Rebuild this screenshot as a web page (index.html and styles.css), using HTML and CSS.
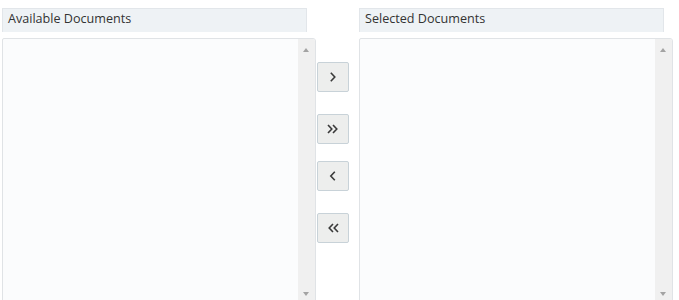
FILE: index.html
```html
<!DOCTYPE html>
<html>
<head>
<meta charset="utf-8">
<link rel="stylesheet" href="styles.css">
</head>
<body>
<div class="shuttle">
  <div class="pane">
    <div class="pane-header">Available Documents</div>
    <div class="listbox">
      <div class="list-area"></div>
      <div class="scrollbar">
        <span class="arrow-up"></span>
        <span class="arrow-down"></span>
      </div>
    </div>
  </div>
  <div class="controls">
    <div class="btn-group">
      <button class="move-btn" title="Move">
        <svg width="12" height="12" viewBox="0 0 12 12"><path d="M3.8 1.8 L7.8 6 L3.8 10.2" fill="none" stroke="#3a3a3a" stroke-width="1.6"/></svg>
      </button>
      <button class="move-btn" title="Move All">
        <svg width="14" height="12" viewBox="0 0 14 12"><path d="M2 2 L5.8 6 L2 10 M7 2 L10.8 6 L7 10" fill="none" stroke="#3a3a3a" stroke-width="1.6"/></svg>
      </button>
    </div>
    <div class="btn-group">
      <button class="move-btn" title="Remove">
        <svg width="12" height="12" viewBox="0 0 12 12"><path d="M7.8 1.8 L3.8 6 L7.8 10.2" fill="none" stroke="#3a3a3a" stroke-width="1.6"/></svg>
      </button>
      <button class="move-btn" title="Remove All">
        <svg width="14" height="12" viewBox="0 0 14 12"><path d="M7 2 L3.2 6 L7 10 M12 2 L8.2 6 L12 10" fill="none" stroke="#3a3a3a" stroke-width="1.6"/></svg>
      </button>
    </div>
  </div>
  <div class="pane">
    <div class="pane-header">Selected Documents</div>
    <div class="listbox">
      <div class="list-area"></div>
      <div class="scrollbar">
        <span class="arrow-up"></span>
        <span class="arrow-down"></span>
      </div>
    </div>
  </div>
</div>
</body>
</html>
```

FILE: styles.css
```css
html, body {
  margin: 0;
  padding: 0;
  background: #ffffff;
  font-family: "Open Sans", "Noto Sans", "Liberation Sans", sans-serif;
  overflow: hidden;
}

.shuttle {
  display: flex;
  align-items: flex-start;
  padding: 8px 0 0 2px;
}

.pane {
  display: flex;
  flex-direction: column;
  width: 314px;
}

.pane-header {
  width: 305px;
  height: 24px;
  box-sizing: border-box;
  background: #eef2f5;
  border: 1px solid #e2e6ea;
  border-bottom: none;
  color: #333333;
  font-size: 12.6px;
  line-height: 20px;
  padding-left: 5px;
  white-space: nowrap;
}

.listbox {
  margin-top: 6px;
  height: 270px;
  display: flex;
  box-sizing: border-box;
  border: 1px solid #e0e3e6;
  border-radius: 2px 3px 0 0;
  background: #fbfcfd;
  overflow: hidden;
}

.list-area {
  flex: 1;
}

.scrollbar {
  width: 17px;
  background: #f0f0f0;
  position: relative;
}

.arrow-up, .arrow-down {
  position: absolute;
  left: 5px;
  width: 0;
  height: 0;
  border-left: 3.5px solid transparent;
  border-right: 3.5px solid transparent;
}

.arrow-up {
  top: 9px;
  border-bottom: 4px solid #a3a3a3;
}

.arrow-down {
  top: 253px;
  border-top: 4px solid #a3a3a3;
}

.controls {
  display: flex;
  flex-direction: column;
  gap: 17px;
  margin: 54px 10px 0 1px;
  width: 32px;
}

.btn-group {
  display: flex;
  flex-direction: column;
  gap: 22px;
}

.move-btn {
  width: 32px;
  height: 30px;
  padding: 0;
  margin: 0;
  box-sizing: border-box;
  border: 1px solid #c8d2d8;
  border-radius: 2px;
  background: #edeeed;
  display: flex;
  align-items: center;
  justify-content: center;
  cursor: pointer;
}

.move-btn svg {
  display: block;
}
```
